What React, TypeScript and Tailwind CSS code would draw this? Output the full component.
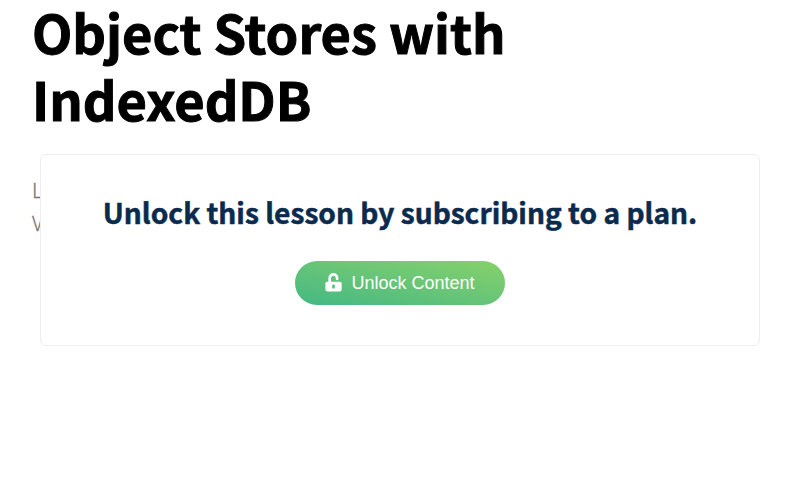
function UnlockIcon() {
  return (
    <svg viewBox="0 0 17 19" className="mr-[10px] mb-[2px] h-[19px] w-[17px] shrink-0" fill="none">
      <path d="M4.7 10V5.1a3.7 3.7 0 0 1 7.4 0V6" stroke="currentColor" strokeWidth="2.7" strokeLinecap="round" />
      <path
        fill="currentColor"
        fillRule="evenodd"
        d="M2.2 8.8h12.7a1.8 1.8 0 0 1 1.8 1.8v6a1.8 1.8 0 0 1-1.8 1.8H2.2a1.8 1.8 0 0 1-1.8-1.8v-6A1.8 1.8 0 0 1 2.2 8.8Zm6.3 2.7a1.4 1.4 0 0 0-1.4 1.4v1.4a1.4 1.4 0 0 0 2.8 0v-1.4a1.4 1.4 0 0 0-1.4-1.4Z"
      />
    </svg>
  );
}

export default function App() {
  return (
    <main className="relative h-[500px] w-[800px] overflow-hidden bg-white font-['Noto_Sans_CJK_SC',sans-serif]">
      <div className="px-8">
        <h1 className="-mt-[2px] text-[52.4px] leading-[67px] font-bold text-black [-webkit-text-stroke:1px_black]">
          <span className="block">Object Stores with</span>
          <span className="block">IndexedDB</span>
        </h1>
        <p className="mt-[41px] text-[20px] leading-[33px] font-light text-[#777] [-webkit-text-stroke:0.3px_#777]">
          <span className="block">L</span>
          <span className="block">V</span>
        </p>
      </div>
      <section className="absolute top-[154px] left-10 flex h-[192px] w-[720px] flex-col items-center rounded-md border border-[#eee] bg-white pt-[38px]">
        <h2 className="text-[28.15px] leading-[38px] font-bold whitespace-nowrap text-[#0a2b4e] [-webkit-text-stroke:0.5px_#0a2b4e]">Unlock this lesson by subscribing to a plan.</h2>
        <button className="mt-[30px] flex h-11 w-[210px] items-center rounded-full bg-linear-to-tr from-[#41b883] to-[#86d169] pl-[30px] font-['Liberation_Sans',sans-serif] text-[18px] whitespace-nowrap text-white">
          <UnlockIcon />
          <span className="-ml-[0.5px]">Unlock Content</span>
        </button>
      </section>
    </main>
  );
}
